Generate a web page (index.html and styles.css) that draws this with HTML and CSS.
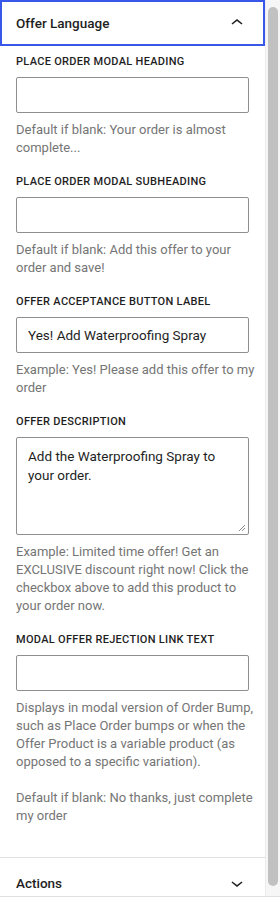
FILE: index.html
```html
<!DOCTYPE html>
<html>
<head>
<meta charset="utf-8">
<link rel="stylesheet" href="styles.css">
</head>
<body>
<div class="frame">
  <div class="panel">
    <div class="panel-header is-focused">
      <span class="panel-title">Offer Language</span>
      <svg class="chev" viewBox="0 0 24 24" width="24" height="24"><path d="M6.5 12.4L12 8l5.5 4.4-.9 1.2L12 10l-4.6 3.6-.9-1.2z"/></svg>
    </div>
    <div class="panel-body">
      <div class="field">
        <label class="label">Place Order Modal Heading</label>
        <div class="input"></div>
        <p class="help">Default if blank: Your order is almost complete...</p>
      </div>
      <div class="field">
        <label class="label">Place Order Modal Subheading</label>
        <div class="input"></div>
        <p class="help">Default if blank: Add this offer to your order and save!</p>
      </div>
      <div class="field">
        <label class="label">Offer Acceptance Button Label</label>
        <div class="input">Yes! Add Waterproofing Spray</div>
        <p class="help">Example: Yes! Please add this offer to my order</p>
      </div>
      <div class="field">
        <label class="label">Offer Description</label>
        <div class="textarea">Add the Waterproofing Spray to your order.<svg class="grip" viewBox="0 0 8 8" width="8" height="8"><path d="M7 1L1 7M7 4L4 7" stroke="#8a8a8a" stroke-width="1"/></svg></div>
        <p class="help">Example: Limited time offer! Get an EXCLUSIVE discount right now! Click the checkbox above to add this product to your order now.</p>
      </div>
      <div class="field">
        <label class="label">Modal Offer Rejection Link Text</label>
        <div class="input"></div>
        <p class="help">Displays in modal version of Order Bump, such as Place Order bumps or when the Offer Product is a variable product (as opposed to a specific variation).</p>
        <p class="help help-gap">Default if blank: No thanks, just complete my order</p>
      </div>
    </div>
    <div class="panel-header closed">
      <span class="panel-title">Actions</span>
      <svg class="chev" viewBox="0 0 24 24" width="24" height="24"><path d="M17.5 11.6L12 16l-5.5-4.4.9-1.2L12 14l4.6-3.6.9 1.2z"/></svg>
    </div>
  </div>
  <div class="scrollbar"><div class="thumb"></div></div>
</div>
</body>
</html>
```
FILE: styles.css
```css
html, body {
  margin: 0;
  padding: 0;
  background: #fff;
}
body {
  width: 280px;
  height: 905px;
  overflow: hidden;
  font-family: Roboto, "Liberation Sans", sans-serif;
  color: #1e1e1e;
  -webkit-font-smoothing: antialiased;
}
.frame {
  display: flex;
  height: 897px;
  border-bottom: 1px solid #e0e0e0;
  overflow: hidden;
  box-sizing: border-box;
}
.panel {
  flex: 1;
  min-width: 0;
}
.panel-header {
  display: flex;
  align-items: center;
  justify-content: space-between;
  padding: 0 16px;
  height: 46px;
  box-sizing: border-box;
}
.panel-header.is-focused {
  box-shadow: inset 0 0 0 2px #3858e9;
}
.panel-header.closed {
  height: 48px;
  border-top: 1px solid #e0e0e0;
  padding-top: 3px;
}
.panel-title {
  font-size: 13.5px;
  font-weight: 500;
}
.chev {
  fill: #1e1e1e;
  display: block;
}
.panel-body {
  padding: 8px 3px 32px 16px;
  display: flex;
  flex-direction: column;
  gap: 17px;
}
.field {
  display: flex;
  flex-direction: column;
}
.label {
  font-size: 11px;
  font-weight: 500;
  line-height: 15px;
  text-transform: uppercase;
  letter-spacing: 0.3px;
  margin-bottom: 8px;
}
.input, .textarea {
  border: 1px solid #8f8f8f;
  border-radius: 2px;
  box-sizing: border-box;
  font-size: 13.5px;
  color: #1e1e1e;
  padding: 0 11px;
  margin-right: 13px;
}
.input {
  height: 36px;
  line-height: 34px;
  white-space: nowrap;
}
.textarea {
  position: relative;
  height: 98px;
  padding: 9px 11px;
  line-height: 19px;
}
.grip {
  position: absolute;
  right: 2px;
  bottom: 2px;
}
.help {
  margin: 8px 0 0;
  font-size: 13px;
  line-height: 18px;
  color: #757575;
}
.help-gap {
  margin-top: 18px;
}
.scrollbar {
  width: 15px;
  flex: none;
  background: #f6f6f6;
  border-left: 1px solid #ececec;
  box-sizing: border-box;
  padding: 7px 2px 10px 2px;
  display: flex;
}
.thumb {
  flex: 1;
  background: #c1c1c1;
  border-radius: 5px;
}
```
